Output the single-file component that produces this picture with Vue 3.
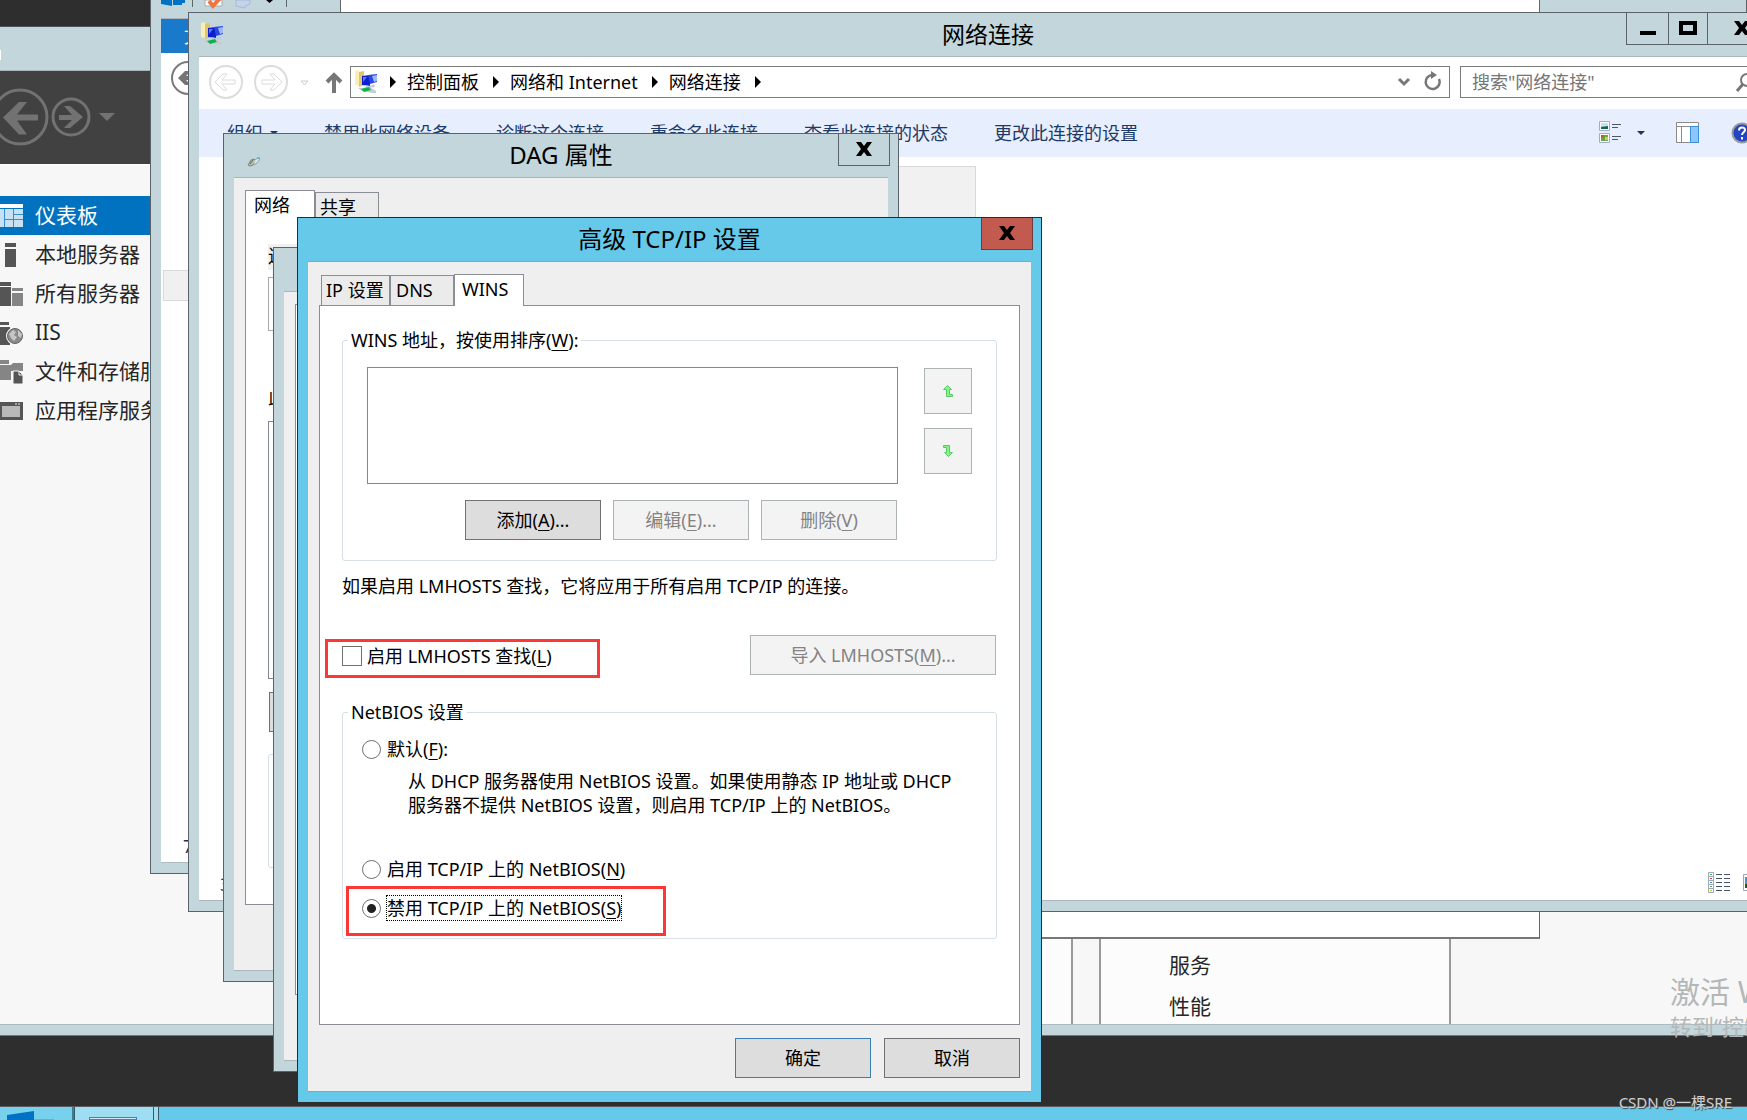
<script setup>
import { ref } from 'vue'

const navItems = [
  { id: 'dashboard', label: '仪表板', active: true },
  { id: 'local', label: '本地服务器' },
  { id: 'all', label: '所有服务器' },
  { id: 'iis', label: 'IIS' },
  { id: 'files', label: '文件和存储服务' },
  { id: 'apps', label: '应用程序服务器' },
]
const crumbs = ['控制面板', '网络和 Internet', '网络连接']
const commands = ['禁用此网络设备', '诊断这个连接', '重命名此连接', '查看此连接的状态', '更改此连接的设置']
const lmhosts = ref(false)
const netbios = ref('disable')
</script>

<template>
  <div class="desktop">
    <!-- Server manager -->
    <section class="manager">
      <div class="manager-title"><span class="edge-mark"></span></div>
      <header class="manager-head">
        <svg width="120" height="92" viewBox="0 0 120 92" fill="none" stroke="#727272">
          <circle cx="20" cy="46" r="27" stroke-width="3" />
          <path d="M38 43.500v6H17l10 14h-8L3 46.500 19 31h8L17 43.500z" fill="#727272" stroke="none" />
          <circle cx="71" cy="46" r="18" stroke-width="3" />
          <path d="M59 44v5h13l-8 8h6l13-11-13-11h-6l8 9z" fill="#727272" stroke="none" />
          <path d="M99 42h16l-8 8z" fill="#727272" stroke="none" />
        </svg>
      </header>
      <div class="manager-body">
        <nav class="side-nav">
          <a v-for="item in navItems" :key="item.id" href="#" :class="['side-link', { active: item.active }]">
            <svg class="side-icon" width="23" height="24" viewBox="0 0 23 24">
              <g v-if="item.id === 'dashboard'">
                <path d="M0 0h23v4H0z" fill="#fff" />
                <path d="M0 5h23v18H0z" fill="#c7e0f2" />
                <path d="M4.500 5v18M13.500 5v18M5 15.500h18M14 10.500h9" stroke="#2f8fd0" fill="none" />
              </g>
              <g v-else-if="item.id === 'local'" fill="#555">
                <path d="M5 0h11v4H5zM5 6h11v18H5z" />
              </g>
              <g v-else-if="item.id === 'all'">
                <path d="M0 0h11v4H0zM0 5h11v19H0z" fill="#555" />
                <path d="M12 6h11v3H12zM12 11h11v13H12z" fill="#858585" />
              </g>
              <g v-else-if="item.id === 'iis'">
                <path d="M0 1h9v3H0zM0 6h10v18H0z" fill="#555" />
                <circle cx="15" cy="15" r="9" fill="#f7f7f7" />
                <circle cx="15" cy="15" r="7.500" fill="#8a8a8a" stroke="#666" />
                <path d="M9 13l4-4 3 2-2 3 3 2-3 4-3-3zM18 9l4 4-1 4-3-2z" fill="#c6c6c6" />
              </g>
              <g v-else-if="item.id === 'files'">
                <path d="M0 0h9v4H0zM0 5h11l2-2h10v8H11v9H0z" fill="#858585" />
                <path d="M13 11h6l4 4v9H13z" fill="#555" stroke="#f7f7f7" />
                <path d="M19 11v4h4" fill="none" stroke="#f7f7f7" />
              </g>
              <g v-else>
                <path d="M0 3h23v18H0z" fill="#555" />
                <path d="M2 7h18v11H2z" fill="#b9b9b9" />
                <path d="M15 5h2M18 5h2" stroke="#eee" />
              </g>
            </svg>
            <span>{{ item.label }}</span>
          </a>
        </nav>
        <div class="tiles">
          <div class="tile tile-first"></div>
          <div class="tile">
            <a href="#">服务</a>
            <a href="#">性能</a>
          </div>
        </div>
      </div>
    </section>

    <!-- File explorer -->
    <section class="explorer">
      <div class="quick-bar">
        <svg width="160" height="18" viewBox="0 0 160 18">
          <path d="M0 0h11v6L0 4zM12 0h12v3h-3v2h-9z" fill="#0072c6" />
          <path d="M31.500 0v7M125.500 0v7" stroke="#5f676d" />
          <path d="M44 0h17v6H44z" fill="#fff" stroke="#aaa" />
          <path d="M48 1l4 5 8-9" stroke="#ee7443" stroke-width="4" fill="none" />
          <path d="M75 0h14v4l-5 2v2l-9-2z" fill="#c5d2ea" stroke="#aab8d6" />
          <path d="M105 0h7l-3.500 3z" fill="#000" />
        </svg>
      </div>
      <div class="explorer-client">
        <div class="file-tab">文</div>
        <svg class="explorer-back" width="40" height="40" viewBox="0 0 40 40">
          <circle cx="20" cy="20" r="16" fill="none" stroke="#7a7a7a" stroke-width="2" />
          <path d="M30 18v4H18l5 5h-6l-7-7 7-7h6l-5 5z" fill="#757575" />
        </svg>
        <div class="tree-row"></div>
        <div class="item-count">7</div>
      </div>
    </section>

    <div class="blank-pane"></div>

    <div class="activation"><p class="act-title">激活 W</p><p class="act-sub">转到“控制</p></div>

    <!-- Network connections -->
    <section class="window network">
      <header class="caption">
        <svg class="net-icon" width="24" height="24" viewBox="0 0 24 24">
          <path d="M1 1l4-1v16l-4-1z" fill="#f9efb4" /><path d="M5 2l5-1v14l-5 2z" fill="#e2c566" />
          <path d="M8 6l8-1v11l-8-1z" fill="#0c1fd0" /><path d="M9 7l4 0-4 5z" fill="#5c7cf4" />
          <path d="M14 5l9-1v8l-7 2z" fill="#2b49e0" /><path d="M18 6l5-1v6l-3 1z" fill="#9db8f8" />
          <path d="M10 15l6 1 4-2 1 3-7 1z" fill="#b9cde6" /><path d="M4 18h5l3-1h4l6 4v2h-4l-4-1-6-1z" fill="#c3ced3" />
          <path d="M7 19l8-2 2 3-7 2z" fill="#0cb34d" />
        </svg>
        <h1>网络连接</h1>
        <div class="win-buttons">
          <button class="min" aria-label="最小化"><svg width="16" height="14"><path d="M0 10h16v4H0z" /></svg></button>
          <button class="max" aria-label="最大化"><svg width="18" height="14"><path d="M2 2h14v10H2z" fill="none" stroke="#000" stroke-width="4" /></svg></button>
          <button class="cls" aria-label="关闭"><svg width="16" height="14" viewBox="0 0 16 14"><path d="M0 0h5l3 4 3-4h5l-5 7 5 7h-5L8 10l-3 4H0l5-7z" /></svg></button>
        </div>
      </header>
      <div class="client network-client">
        <div class="address-row">
          <svg width="150" height="40" viewBox="0 0 150 40" fill="none" stroke="#dcdcdc">
            <circle cx="27" cy="20" r="16" stroke-width="2" />
            <path d="M36 18v4H23l5 6h-4l-8-8 8-8h4l-5 6z" />
            <circle cx="72" cy="20" r="16" stroke-width="2" />
            <path d="M63 18v4h13l-5 6h4l8-8-8-8h-4l5 6z" />
            <path d="M102 19h7l-3.500 4z" stroke="#ccc" />
            <path d="M135 31V14M128 20l7-7 7 7" stroke="#777" stroke-width="4" />
          </svg>
          <div class="address">
            <svg class="net-icon" width="24" height="24" viewBox="0 0 24 24">
              <path d="M1 1l4-1v16l-4-1z" fill="#f9efb4" /><path d="M5 2l5-1v14l-5 2z" fill="#e2c566" />
              <path d="M8 6l8-1v11l-8-1z" fill="#0c1fd0" /><path d="M9 7l4 0-4 5z" fill="#5c7cf4" />
              <path d="M14 5l9-1v8l-7 2z" fill="#2b49e0" /><path d="M18 6l5-1v6l-3 1z" fill="#9db8f8" />
              <path d="M10 15l6 1 4-2 1 3-7 1z" fill="#b9cde6" /><path d="M4 18h5l3-1h4l6 4v2h-4l-4-1-6-1z" fill="#c3ced3" />
              <path d="M7 19l8-2 2 3-7 2z" fill="#0cb34d" />
            </svg>
            <i class="tri"></i>
            <template v-for="c in crumbs" :key="c"><button class="crumb">{{ c }}</button><i class="tri"></i></template>
            <svg class="address-tools" width="46" height="24" viewBox="0 0 46 24" fill="none" stroke="#777">
              <path d="M2 9l5 5 5-5" stroke-width="3" />
              <path d="M42 9a7 7 0 1 1-6-4" stroke-width="2.500" /><path d="M34 1l6 4-6 4z" fill="#777" stroke="none" />
            </svg>
          </div>
          <label class="search">
            <input type="text" placeholder='搜索"网络连接"' aria-label="搜索" />
            <svg width="20" height="20" viewBox="0 0 20 20" fill="none" stroke="#777" stroke-width="2"><circle cx="12" cy="8" r="6" /><path d="M8 12l-6 7" stroke-width="3" /></svg>
          </label>
        </div>
        <div class="toolbar">
          <button class="organize">组织<i class="down"></i></button>
          <button v-for="c in commands" :key="c">{{ c }}</button>
          <div class="tool-icons">
            <svg width="160" height="26" viewBox="0 0 160 26">
              <g fill="#fff" stroke="#9fb0c6"><path d="M.5 1.500h10v9H.5zM.5 13.500h10v9H.5z" /></g>
              <path d="M2 3h7v6H2z" fill="#bfe3f7" /><path d="M2 7l7-1v3H2z" fill="#13645f" />
              <path d="M2 15h7v6H2z" fill="#67a843" /><path d="M2 15h3v3H2z" fill="#d8532e" /><path d="M6 17h3v3H6z" fill="#e2c64b" />
              <path d="M13 4.500h9M13 7.500h6M13 16.500h9M13 19.500h6" stroke="#4a5a73" />
              <path d="M38 11h8l-4 4z" fill="#1e3560" />
              <path d="M77.500 2.500h22v20h-22z" fill="#fff" stroke="#8a8a8a" />
              <path d="M77 6.500h23M82.500 7v16" stroke="#8a8a8a" /><path d="M91.500 6.500h8v16h-8z" fill="#8cc6fb" stroke="#3a8fe0" />
              <circle cx="143" cy="13" r="9.500" fill="#2145c4" stroke="#999" stroke-width="2" />
              <path d="M140 10.500c0-4 6-4 6-.5 0 2-3 2.500-3 5M143 17v2.500" fill="none" stroke="#fff" stroke-width="2" />
            </svg>
          </div>
        </div>
        <div class="folder-view">
          <div class="tile-selected"></div>
        </div>
        <footer class="status">
          <span>3</span>
          <svg width="69" height="24" viewBox="0 0 69 24">
            <g fill="#fff" stroke="#9aa8b8"><path d="M.5.5h5v4h-5zM.5 4.500h5v4h-5zM.5 8.500h5v4h-5zM.5 12.500h5v4h-5zM.5 16.500h5v4h-5z" /></g>
            <path d="M2 2.500h2M2 14.500h2" stroke="#5aa05a" /><path d="M2 6.500h2" stroke="#e03030" /><path d="M2 10.500h2" stroke="#3a7fd0" /><path d="M2 18.500h2" stroke="#d0c020" />
            <path d="M8 2.500h6M16 2.500h6M8 6.500h6M16 6.500h6M8 10.500h6M16 10.500h6M8 14.500h6M16 14.500h6M8 18.500h6M16 18.500h6" stroke="#44546b" />
            <path d="M35.500 2.500h22v16h-22z" fill="#fff" stroke="#9aa8b8" /><path d="M37 5h18v11H37z" fill="#3d94dc" /><path d="M37 12h18v4H37z" fill="#1f5a36" />
          </svg>
        </footer>
      </div>
    </section>

    <!-- Adapter properties -->
    <section class="window props">
      <header class="caption">
        <svg class="plug" width="14" height="10" viewBox="0 0 14 10"><path d="M1 8l3-5 3-1 2 2-3 4-3 1z" fill="#b9bfb4" stroke="#7d8478" /><path d="M3 7l3-4M8 7l3-4" stroke="#5f665c" /><path d="M8 3l3-2 2 1-3 4-3 2" fill="#dde4e4" stroke="#8fa3ad" /><path d="M10 1h3" stroke="#35a9e0" /></svg>
        <h2>DAG 属性</h2>
        <button class="close" aria-label="关闭"><svg width="16" height="14" viewBox="0 0 16 14"><path d="M0 0h5l3 4 3-4h5l-5 7 5 7h-5L8 10l-3 4H0l5-7z" /></svg></button>
      </header>
      <div class="client">
        <div class="tabs">
          <button class="tab selected">网络</button><button class="tab">共享</button>
        </div>
        <div class="page">
          <div class="adapter-label">连</div>
          <div class="adapter-box"></div>
          <div class="items-label">此</div>
          <div class="items-box"></div>
          <div class="install"></div>
          <div class="description"></div>
        </div>
      </div>
    </section>

    <!-- Protocol properties -->
    <section class="window protocol">
      <header class="caption"></header>
      <div class="client"><div class="page"></div></div>
    </section>

    <!-- Advanced TCP/IP settings -->
    <section class="window advanced">
      <header class="caption">
        <h2>高级 TCP/IP 设置</h2>
        <button class="close" aria-label="关闭"><svg width="16" height="14" viewBox="0 0 16 14"><path d="M0 0h5l3 4 3-4h5l-5 7 5 7h-5L8 10l-3 4H0l5-7z" /></svg></button>
      </header>
      <form class="client" @submit.prevent>
        <div class="tabs">
          <button type="button" class="tab">IP 设置</button><button type="button" class="tab dns">DNS</button><button type="button" class="tab selected">WINS</button>
        </div>
        <div class="page">
          <fieldset>
            <legend>WINS 地址，按使用排序(<u>W</u>):</legend>
            <div class="wins">
              <div class="wins-main">
                <div class="listbox" role="listbox" aria-label="WINS 地址"></div>
                <div class="row-buttons">
                  <button type="button" class="btn">添加(<u>A</u>)...</button>
                  <button type="button" class="btn" disabled>编辑(<u>E</u>)...</button>
                  <button type="button" class="btn" disabled>删除(<u>V</u>)</button>
                </div>
              </div>
              <div class="order">
                <button type="button" class="btn" disabled aria-label="上移"><svg width="10" height="12" viewBox="0 0 10 12"><path d="M4.500.5l4 4h-2v5h3v2h-6v-7h-3z" fill="#86f486" stroke="#5cc76a" /></svg></button>
                <button type="button" class="btn" disabled aria-label="下移"><svg width="10" height="12" viewBox="0 0 10 12"><path d="M.5.5h6v7h3l-4 4-4-4h2v-5h-3z" fill="#86f486" stroke="#5cc76a" /></svg></button>
              </div>
            </div>
          </fieldset>
          <p class="hint">如果启用 LMHOSTS 查找，它将应用于所有启用 TCP/IP 的连接。</p>
          <div class="lmhosts">
            <label class="choice check"><input v-model="lmhosts" type="checkbox" /><span>启用 LMHOSTS 查找(<u>L</u>)</span><i class="mark mark-check"></i></label>
            <button type="button" class="btn import" disabled>导入 LMHOSTS(<u>M</u>)...</button>
          </div>
          <fieldset class="netbios">
            <legend>NetBIOS 设置</legend>
            <label class="choice"><input v-model="netbios" type="radio" name="netbios" value="default" /><span>默认(<u>F</u>):</span></label>
            <p class="explain">从 DHCP 服务器使用 NetBIOS 设置。如果使用静态 IP 地址或 DHCP<br />服务器不提供 NetBIOS 设置，则启用 TCP/IP 上的 NetBIOS。</p>
            <label class="choice enable"><input v-model="netbios" type="radio" name="netbios" value="enable" /><span>启用 TCP/IP 上的 NetBIOS(<u>N</u>)</span></label>
            <label class="choice disable"><input v-model="netbios" type="radio" name="netbios" value="disable" /><span class="focused">禁用 TCP/IP 上的 NetBIOS(<u>S</u>)</span><i class="mark mark-radio"></i></label>
          </fieldset>
        </div>
        <div class="actions">
          <button type="submit" class="btn default">确定</button>
          <button type="button" class="btn">取消</button>
        </div>
      </form>
    </section>

    <footer class="taskbar">
      <button class="start" aria-label="开始"><svg width="54" height="13" viewBox="0 0 54 13"><path d="M7 8l27-4v9H7z" fill="#0072c6" /><path d="M34 12h20v1H34z" fill="#4fb8e8" /></svg></button>
      <button class="task" aria-label="资源管理器"><svg width="48" height="3" viewBox="0 0 48 3"><path d="M0 0h48v3H0z" fill="#3f7fc4" /><path d="M1 1h46v1H1z" fill="#d5e9fb" /></svg></button>
      <span class="task-edge"></span>
    </footer>
    <div class="credit">CSDN @一棵SRE</div>
  </div>
</template>

<style>
body { margin: 0; }
</style>

<style scoped>
.desktop {
  position: relative;
  height: 100vh;
  overflow: hidden;
  background: #2e2e2e;
  color: #000;
  font: 18px/24px "Noto Sans", "Noto Sans CJK SC", sans-serif;
  --frame: #c3d6dc;
  --edge: #5c6269;
}
.desktop *, .desktop *::before, .desktop *::after { box-sizing: border-box; }
button { font: inherit; color: inherit; padding: 0; margin: 0; border: 0; background: none; white-space: nowrap; }
a { color: inherit; text-decoration: none; }
p, h1, h2 { margin: 0; font-weight: 400; }
svg { display: block; flex: none; }
u { text-underline-offset: 3px; text-decoration-thickness: 1px; }

/* Server manager */
.manager {
  position: absolute; left: 0; right: 0; top: 26px; bottom: 84px;
  display: flex; flex-direction: column;
  background: var(--frame); border-top: 1px solid #4c5257; border-bottom: 1px solid #6d777b;
}
.manager-title { flex: none; height: 44px; border-bottom: 1px solid #a9b4bb; padding-top: 23px; }
.edge-mark { display: block; width: 1px; height: 10px; background: #fff; }
.manager-head { flex: none; height: 93px; background: #414141; }
.manager-body { flex: 1; min-height: 0; display: flex; background: #f7f7f7; margin-bottom: 10px; border-bottom: 1px solid #aebcc2; border-top: 1px solid #fff; }
.side-nav { width: 240px; padding-top: 31px; font-size: 21px; }
.side-link { display: flex; align-items: center; height: 39px; gap: 12px; color: #262626; white-space: nowrap; }
.side-link span { padding-bottom: 2px; }
.side-link.active { background: #0072bf; color: #fff; }
.tiles { flex: 1; display: flex; gap: 26px; padding-top: 600px; }
.tile { width: 352px; background: #fcfcfc; border: solid #999; border-width: 0 2px; padding: 180px 68px 0; font-size: 21px; color: #262626; }
.tile-first { width: 833px; border-left: 0; background: linear-gradient(to right, #f7f7f7 50%, #fcfcfc 50%); }
.tile a { display: block; height: 41px; line-height: 40px; }

/* File explorer */
.explorer {
  position: absolute; left: 150px; right: 0; top: 0; height: 874px;
  display: flex; flex-direction: column;
  padding: 0 10px 10px; background: var(--frame); border: solid var(--edge); border-width: 0 1px 1px;
}
.quick-bar { height: 19px; border-bottom: 1px solid #a9b4bb; }
.explorer-client { flex: 1; display: flex; flex-direction: column; align-items: flex-start; background: #fff; border-bottom: 1px solid #aebcc2; }
.file-tab { width: 80px; height: 34px; padding-left: 23px; line-height: 34px; background: #1979ca; color: #fff; }
.explorer-back { margin: 5px 0 0 7px; }
.tree-row { width: 100px; height: 31px; margin: 172px 0 0 2px; background: #f0f0f0; border: 1px solid #d9d9d9; }
.item-count { margin-top: auto; padding: 0 0 4px 22px; color: #1e2f55; }
.blank-pane {
  position: absolute; left: 340px; right: 207px; top: -1px; height: 940px;
  background: #fff; border: 1px solid #666; border-bottom: 2px solid #777;
}

.activation { position: absolute; right: -30px; bottom: 82px; width: 107px; color: #b4b7b8; white-space: nowrap; }
.act-title { font-size: 30px; line-height: 44px; }
.act-sub { font-size: 22px; line-height: 24px; }

/* Shared window chrome */
.window {
  position: absolute; isolation: isolate; display: flex; flex-direction: column;
  padding: 0 10px 10px; background: var(--frame); border: 1px solid var(--edge);
}
.caption { position: relative; display: flex; justify-content: center; height: 43px; flex: none; }
.caption h1 { font-size: 23px; line-height: 42px; }
.caption h2 { font-size: 24px; line-height: 42px; }
.client { flex: 1; display: flex; flex-direction: column; background: #efefef; border: solid #a9b4bb; border-width: 1px 0; }
.close {
  position: absolute; right: -2px; top: 0; width: 52px; height: 32px;
  display: flex; align-items: center; justify-content: center; padding-bottom: 2px; border: 1px solid #5c6269; border-top: 0;
}
.tabs { display: flex; align-items: flex-end; position: relative; z-index: 1; }
.tab { display: flex; align-items: flex-start; height: 30px; line-height: 28px; padding: 0 4px; background: #ebebeb; border: 1px solid #8a8c96; border-bottom: 0; }
.tab.selected { height: 33px; margin-bottom: -1px; background: #fff; }
.page { background: #fff; border: 1px solid #8a8c96; }

/* Network connections */
.network { left: 188px; right: -41px; top: 12px; height: 900px; }
.network .caption .net-icon { position: absolute; left: 1px; top: 9px; }
.win-buttons { position: absolute; right: 0; top: 0; display: flex; height: 32px; border: solid #5c6269; border-width: 0 1px 1px; }
.win-buttons button { display: flex; align-items: center; justify-content: center; padding-bottom: 2px; border-left: 1px solid #5c6269; }
.win-buttons .min { width: 41px; border-left: 0; }
.win-buttons .max { width: 39px; }
.win-buttons .cls { width: 69px; }
.network-client { background: #fff; }
.address-row { display: flex; align-items: center; height: 52px; padding-bottom: 2px; flex: none; }
.address { flex: 1; display: flex; align-items: center; height: 32px; margin-left: 1px; padding: 0 6px 0 3px; border: 1px solid #7a7a7a; }
.address .tri { margin: 0 11px 0 14px; }
.address .tri:first-of-type { margin-left: 12px; }
.tri { border: 6px solid transparent; border-left-color: #000; border-right: 0; }
.address-tools { margin-left: auto; }
.search { display: flex; align-items: center; height: 32px; width: 317px; margin: 0 0 0 10px; border: 1px solid #7a7a7a; }
.search input { width: 274px; padding: 0 0 0 11px; border: 0; outline: 0; background: none; font: inherit; }
.search input::placeholder { color: #757575; opacity: 1; }
.toolbar { display: flex; align-items: center; gap: 46px; height: 48px; flex: none; padding: 0 18px 0 28px; background: #e7eefe; color: #1e3a66; }
.organize { display: flex; align-items: center; gap: 7px; }
.down { border: 4px solid transparent; border-top-color: #1e3a66; border-bottom: 0; }
.tool-icons { margin-left: auto; }
.folder-view { flex: 1; padding-top: 9px; }
.tile-selected { width: 450px; height: 80px; margin-left: 327px; background: #f1f1f1; border: 1px solid #d9d9d9; }
.status { display: flex; justify-content: space-between; align-items: center; height: 32px; flex: none; padding: 0 0 0 21px; color: #1e2f55; }

/* Adapter properties */
.props { left: 223px; top: 133px; width: 676px; height: 849px; }
.plug { position: absolute; left: 13px; top: 23px; }
.props .tabs { padding: 12px 11px 0; }
.props .page { margin: -1px 11px 0; height: 682px; padding-left: 22px; }
.props .tab { width: 64px; height: 32px; }
.props .tab.selected { width: 70px; height: 35px; padding-left: 8px; }
.adapter-label { height: 26px; margin-top: 20px; width: 60px; background: #f0f0f0; }
.adapter-box { width: 60px; height: 54px; margin-top: 7px; border: 1px solid #aaa; }
.items-label { margin-top: 54px; }
.items-box { width: 60px; height: 258px; margin-top: 12px; border: 1px solid #828790; }
.install { width: 60px; height: 40px; margin: 13px 0 0 1px; background: #ddd; border: 1px solid #707070; }
.description { width: 60px; height: 114px; margin-top: 22px; border: 1px solid #d5dfe5; border-radius: 3px; }

.protocol { left: 273px; top: 247px; width: 700px; height: 825px; }
.protocol .page { margin: 12px 11px 0; height: 691px; }

/* Advanced TCP/IP settings */
.advanced { left: 297px; top: 217px; width: 745px; background: #66c9e9; border-color: #262b30; border-bottom: 0; }
.advanced .close { background: #c25a50; border-color: #6c3c3c; }
.advanced .client { border-color: #7fa9bb; }
.advanced .tabs { padding: 12px 13px 0; }
.advanced .tab { width: 69px; }
.advanced .tab.dns { width: 64px; padding-left: 5px; }
.advanced .tab.selected { width: 70px; height: 32px; padding-left: 7px; }
.advanced .page { margin: 0 11px; padding: 22px 22px 85px; }
fieldset { margin: 0; padding: 15px 24px 20px; border: 1px solid #d5dfe5; border-radius: 3px; min-width: 0; }
legend { padding: 0 3px; margin-left: -19px; }
.wins { display: flex; gap: 26px; }
.wins-main { flex: 1; }
.listbox { height: 117px; border: 1px solid #828790; background: #fff; }
.row-buttons { display: flex; justify-content: flex-end; gap: 12px; margin-top: 16px; padding-right: 1px; }
.btn { width: 136px; height: 40px; background: #ddd; border: 1px solid #707070; line-height: 38px; }
.btn:disabled { background: #f3f3f3; border-color: #adb2b5; color: #838383; }
.btn.default { border-color: #3c7fb1; }
.order { display: flex; flex-direction: column; gap: 14px; padding-top: 1px; }
.order .btn { display: flex; align-items: center; justify-content: center; width: 48px; height: 46px; }
.hint { margin-top: 13px; }
.lmhosts { display: flex; align-items: center; justify-content: space-between; margin: 37px 0 25px; padding-right: 1px; }
.btn.import { width: 246px; }
.choice { position: relative; display: flex; align-items: center; gap: 6px; width: max-content; }
.choice.check { gap: 5px; padding-top: 1px; }
.choice input { appearance: none; flex: none; width: 19px; height: 19px; margin: 0; background: #fff; border: 1px solid #707070; border-radius: 50%; }
.choice input[type="checkbox"] { width: 20px; height: 20px; border-radius: 0; }
.choice input:checked { background: radial-gradient(circle, #222 4px, #fff 5px); }
.netbios { padding: 13px 19px 18px; }
.netbios legend { margin-left: -14px; }
.explain { margin: 8px 0 40px 46px; white-space: nowrap; }
.disable { margin-top: 15px; }
.focused { outline: 1px dotted #000; }
.mark { position: absolute; border: 3px solid #fb3836; pointer-events: none; }
.mark-check { left: -17px; top: -4px; width: 275px; height: 39px; }
.mark-radio { left: -16px; top: -10px; width: 320px; height: 50px; }
.actions { display: flex; justify-content: flex-end; gap: 13px; padding: 13px 11px; }

/* Taskbar */
.taskbar { position: absolute; left: 0; right: 0; bottom: 0; height: 14px; display: flex; background: #66c9e9; border-top: 1px solid #555b5e; }
.start { width: 74px; background: #78d1ec; border-right: 2px solid #3c7f93; }
.task { display: flex; align-items: flex-end; width: 80px; padding-left: 14px; background: #9eddf2; border: solid #3a5c68; border-width: 0 1px; }
.task-edge { width: 5px; background: #9eddf2; border-right: 1px solid #3a5c68; }
.credit { position: absolute; right: 15px; bottom: 6px; font-size: 15px; line-height: 24px; color: #d0d0d0; text-shadow: 1px 1px 1px #444; }
</style>
